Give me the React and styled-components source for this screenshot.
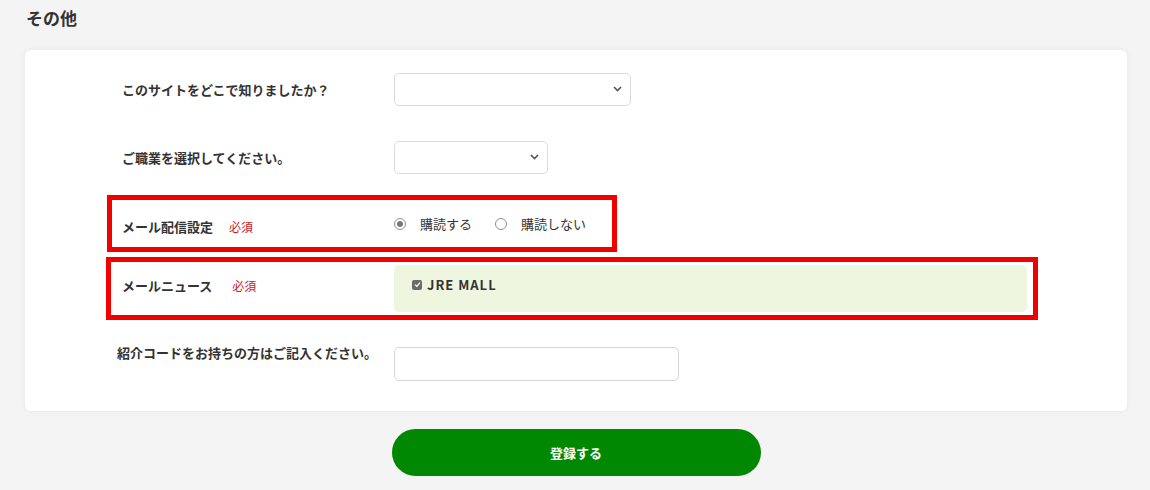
import React from 'react';
import styled, { createGlobalStyle } from 'styled-components';

const GlobalStyle = createGlobalStyle`
  html, body {
    margin: 0;
    padding: 0;
    background: #f4f4f4;
  }
  body {
    font-family: "Noto Sans CJK JP", "Noto Sans", sans-serif;
    color: #333;
  }
`;

const Page = styled.div`
  width: 1150px;
  padding: 6px 23px 14px 25px;
  box-sizing: border-box;
`;

const Title = styled.h2`
  margin: 0 0 0 1px;
  font-size: 17px;
  line-height: 24px;
  font-weight: 700;
  color: #333;
`;

const Card = styled.section`
  margin-top: 20px;
  background: #fff;
  border-radius: 6px;
  box-shadow: 0 0 6px rgba(0, 0, 0, 0.06);
  padding: 18px 0 25px 82px;
  display: flex;
  flex-direction: column;
  align-items: flex-start;
`;

const Row = styled.div`
  display: flex;
  align-items: ${p => p.$align || 'center'};
  margin-top: ${p => p.$space || 0}px;
  margin-left: ${p => p.$shiftLeft || 0}px;
  border: 5px solid ${p => (p.$mark ? '#f20000' : 'transparent')};
  padding: 0 ${p => p.$padRight || 0}px 0 10px;
  box-sizing: border-box;
  width: ${p => (p.$width ? `${p.$width}px` : 'auto')};
  height: ${p => p.$height || 43}px;
`;

const Label = styled.div`
  width: 272px;
  flex-shrink: 0;
  display: flex;
  align-items: center;
  font-size: 13px;
  font-weight: 700;
  line-height: 13px;
  margin-top: ${p => p.$drop || 0}px;
  margin-left: ${p => p.$pull || 0}px;
  white-space: nowrap;
`;

const Required = styled.span`
  margin-left: ${p => p.$gap || 16}px;
  font-size: 12px;
  font-weight: 400;
  color: #cc1b1b;
`;

const SelectWrap = styled.div`
  position: relative;
  width: ${p => p.$w}px;
  height: 33px;
`;

const Select = styled.select`
  appearance: none;
  width: 100%;
  height: 100%;
  border: 1px solid #dcdcdc;
  border-radius: 5px;
  background: #fff;
  font-family: inherit;
  font-size: 13px;
  color: #333;
  padding: 0 8px;
`;

const Chevron = styled.svg`
  position: absolute;
  right: 9px;
  top: 13px;
  pointer-events: none;
`;

const TextInput = styled.input`
  width: 285px;
  height: 34px;
  box-sizing: border-box;
  border: 1px solid #d6d6d6;
  border-radius: 5px;
  background: #fff;
  font-family: inherit;
  font-size: 13px;
  margin-left: 5px;
`;

const RadioGroup = styled.div`
  display: flex;
  align-items: center;
  margin-top: 0;
`;

const RadioItem = styled.label`
  display: flex;
  align-items: center;
  font-size: 13px;
  color: #333;
  margin-right: 23px;
`;

const RadioDot = styled.span`
  width: 12px;
  height: 12px;
  box-sizing: border-box;
  border-radius: 50%;
  border: 1px solid #8f8f8f;
  background: #fff;
  margin: 0 14px 0 0;
  position: relative;
  &::after {
    content: '';
    display: ${p => (p.$on ? 'block' : 'none')};
    position: absolute;
    inset: 2px;
    border-radius: 50%;
    background: #7a7a7a;
  }
`;

const NewsBox = styled.div`
  width: 633px;
  height: 47px;
  background: #eff6e0;
  border-radius: 5px;
  display: flex;
  align-items: center;
  padding: 0 0 8px 18px;
  box-sizing: border-box;
`;

const Check = styled.span`
  width: 10px;
  height: 10px;
  border-radius: 2px;
  background: #6b6b6b;
  display: inline-flex;
  align-items: center;
  justify-content: center;
  margin-right: 5px;
`;

const NewsText = styled.span`
  font-size: 13px;
  font-weight: 700;
  letter-spacing: 1px;
  color: #333;
`;

const Actions = styled.div`
  display: flex;
  justify-content: center;
  margin-top: 18px;
`;

const SubmitButton = styled.button`
  width: 369px;
  height: 47px;
  border: none;
  border-radius: 24px;
  background: #008803;
  color: #fff;
  font-family: inherit;
  font-size: 13px;
  font-weight: 700;
`;

const Dropdown = ({ width }) => (
  <SelectWrap $w={width}>
    <Select><option></option></Select>
    <Chevron width="9" height="6" viewBox="0 0 9 6">
      <path d="M1 1 L4.5 4.5 L8 1" stroke="#555" strokeWidth="1.6" fill="none" />
    </Chevron>
  </SelectWrap>
);

export default function App() {
  return (
    <>
      <GlobalStyle />
      <Page>
        <Title>その他</Title>
        <Card>
          <Row>
            <Label>このサイトをどこで知りましたか？</Label>
            <Dropdown width={237} />
          </Row>
          <Row $space={25}>
            <Label>ご職業を選択してください。</Label>
            <Dropdown width={154} />
          </Row>
          <Row $mark $space={16} $width={510} $height={57}>
            <Label $drop={6}>メール配信設定<Required>必須</Required></Label>
            <RadioGroup>
              <RadioItem><RadioDot $on />購読する</RadioItem>
              <RadioItem><RadioDot />購読しない</RadioItem>
            </RadioGroup>
          </Row>
          <Row $mark $space={5} $shiftLeft={-1} $padRight={6} $height={63}>
            <Label $drop={-6} $pull={1}>メールニュース<Required $gap={20}>必須</Required></Label>
            <NewsBox>
              <Check>
                <svg width="7" height="7" viewBox="0 0 10 10">
                  <path d="M1.5 5.2 L4 7.6 L8.6 2.4" stroke="#fff" strokeWidth="1.8" fill="none" />
                </svg>
              </Check>
              <NewsText>JRE MALL</NewsText>
            </NewsBox>
          </Row>
          <Row $space={22} $align="flex-start" $height={44}>
            <Label $pull={-5} $drop={-1}>紹介コードをお持ちの方はご記入ください。</Label>
            <TextInput type="text" />
          </Row>
        </Card>
        <Actions>
          <SubmitButton>登録する</SubmitButton>
        </Actions>
      </Page>
    </>
  );
}
